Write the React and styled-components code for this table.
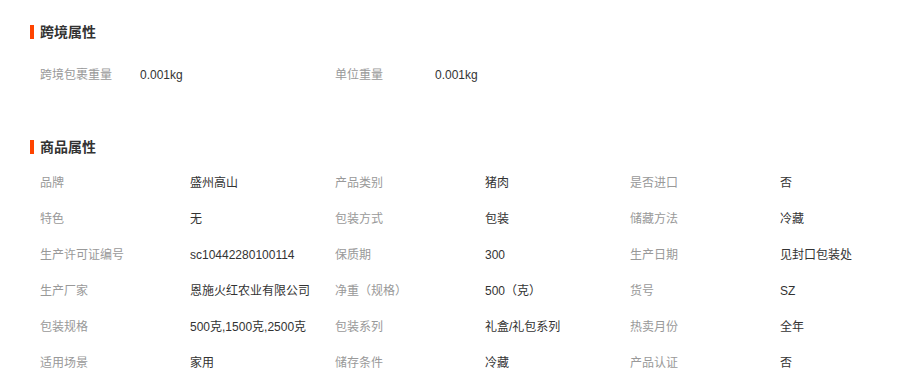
import React from "react";
import styled, { createGlobalStyle } from "styled-components";

const Global = createGlobalStyle`
  html, body { margin: 0; padding: 0; background: #fff; }
  body { font-family: "Liberation Sans", "Noto Sans CJK SC", sans-serif; font-size: 12px; color: #333; }
`;

const Page = styled.div`
  width: 910px;
  height: 383px;
  overflow: hidden;
  padding: 22px 0 0 30px;
  box-sizing: border-box;
`;

const Title = styled.h3`
  margin: ${(p) => p.$mt || 0}px 0 0 0;
  display: flex;
  align-items: center;
  gap: 6px;
  height: 20px;
  font-size: 14px;
  font-weight: bold;
  color: #333;
  line-height: 20px;
`;

const Bar = styled.span`
  width: 4px;
  height: 14px;
  background: #ff4400;
  display: block;
`;

const Grid = styled.div`
  display: grid;
  grid-template-columns: repeat(3, 295px);
  padding-left: 10px;
  margin-top: ${(p) => p.$mt}px;
`;

const Item = styled.div`
  display: flex;
  align-items: center;
  height: 36px;
  line-height: 36px;
  white-space: nowrap;
`;

const Label = styled.span`
  width: ${(p) => p.$w}px;
  flex: none;
  color: #999;
`;

const Value = styled.span`
  color: #333;
`;

const cross = [
  ["跨境包裹重量", "0.001kg"],
  ["单位重量", "0.001kg"],
];

const goods = [
  ["品牌", "盛州高山"],
  ["产品类别", "猪肉"],
  ["是否进口", "否"],
  ["特色", "无"],
  ["包装方式", "包装"],
  ["储藏方法", "冷藏"],
  ["生产许可证编号", "sc10442280100114"],
  ["保质期", "300"],
  ["生产日期", "见封口包装处"],
  ["生产厂家", "恩施火红农业有限公司"],
  ["净重（规格）", "500（克）"],
  ["货号", "SZ"],
  ["包装规格", "500克,1500克,2500克"],
  ["包装系列", "礼盒/礼包系列"],
  ["热卖月份", "全年"],
  ["适用场景", "家用"],
  ["储存条件", "冷藏"],
  ["产品认证", "否"],
];

export default function App() {
  return (
    <>
      <Global />
      <Page>
        <Title>
          <Bar />
          跨境属性
        </Title>
        <Grid $mt={15}>
          {cross.map(([l, v]) => (
            <Item key={l}>
              <Label $w={100}>{l}</Label>
              <Value>{v}</Value>
            </Item>
          ))}
        </Grid>
        <Title $mt={44}>
          <Bar />
          商品属性
        </Title>
        <Grid $mt={8}>
          {goods.map(([l, v]) => (
            <Item key={l}>
              <Label $w={150}>{l}</Label>
              <Value>{v}</Value>
            </Item>
          ))}
        </Grid>
      </Page>
    </>
  );
}
